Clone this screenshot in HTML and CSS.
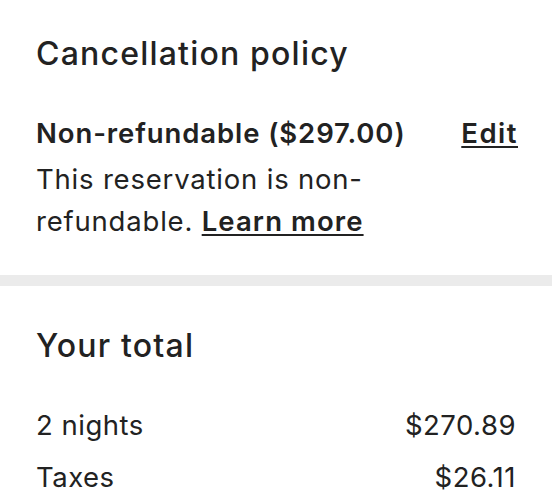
FILE: index.html
```html
<!DOCTYPE html>
<html>
<head>
<meta charset="utf-8">
<link rel="stylesheet" href="styles.css">
</head>
<body>
<section class="section policy">
  <h2 class="title">Cancellation policy</h2>
  <div class="policy-row">
    <span class="policy-name">Non-refundable ($297.00)</span>
    <a class="link edit" href="#">Edit</a>
  </div>
  <p class="policy-text">This reservation is non-<br>refundable. <a class="link more" href="#">Learn more</a></p>
</section>
<div class="divider"></div>
<section class="section total">
  <h2 class="title">Your total</h2>
  <div class="line"><span>2 nights</span><span>$270.89</span></div>
  <div class="line"><span>Taxes</span><span>$26.11</span></div>
</section>
</body>
</html>
```
FILE: styles.css
```css
html, body {
  margin: 0;
  padding: 0;
  background: #ffffff;
}
body {
  font-family: Inter, "Noto Sans", sans-serif;
  color: #222222;
  width: 552px;
  overflow: hidden;
}
.section {
  padding: 0 36px;
}
.policy {
  padding-top: 34px;
  padding-bottom: 33px;
}
.title {
  margin: 0;
  font-size: 32px;
  line-height: 40px;
  font-weight: 500;
  letter-spacing: 1.2px;
}
.policy-row {
  margin-top: 41px;
  display: flex;
  justify-content: space-between;
  align-items: baseline;
  font-size: 27.5px;
  line-height: 36px;
  font-weight: 600;
  letter-spacing: 0.9px;
}
.link {
  color: #222222;
  font-weight: 600;
  text-decoration: underline;
  text-decoration-thickness: 2px;
  text-underline-offset: 3px;
}
.edit {
  letter-spacing: 1.5px;
  margin-right: -2px;
}
.policy-text {
  margin: 7px 0 0;
  font-size: 27.5px;
  line-height: 42px;
  font-weight: 400;
  letter-spacing: 0.8px;
}
.more {
  letter-spacing: 1.1px;
}
.divider {
  height: 11px;
  background: #ebebeb;
}
.total {
  padding-top: 40px;
}
.total .title {
  margin-bottom: 33px;
}
.line {
  display: flex;
  justify-content: space-between;
  font-size: 27.5px;
  line-height: 52px;
  letter-spacing: 0.5px;
}
```
